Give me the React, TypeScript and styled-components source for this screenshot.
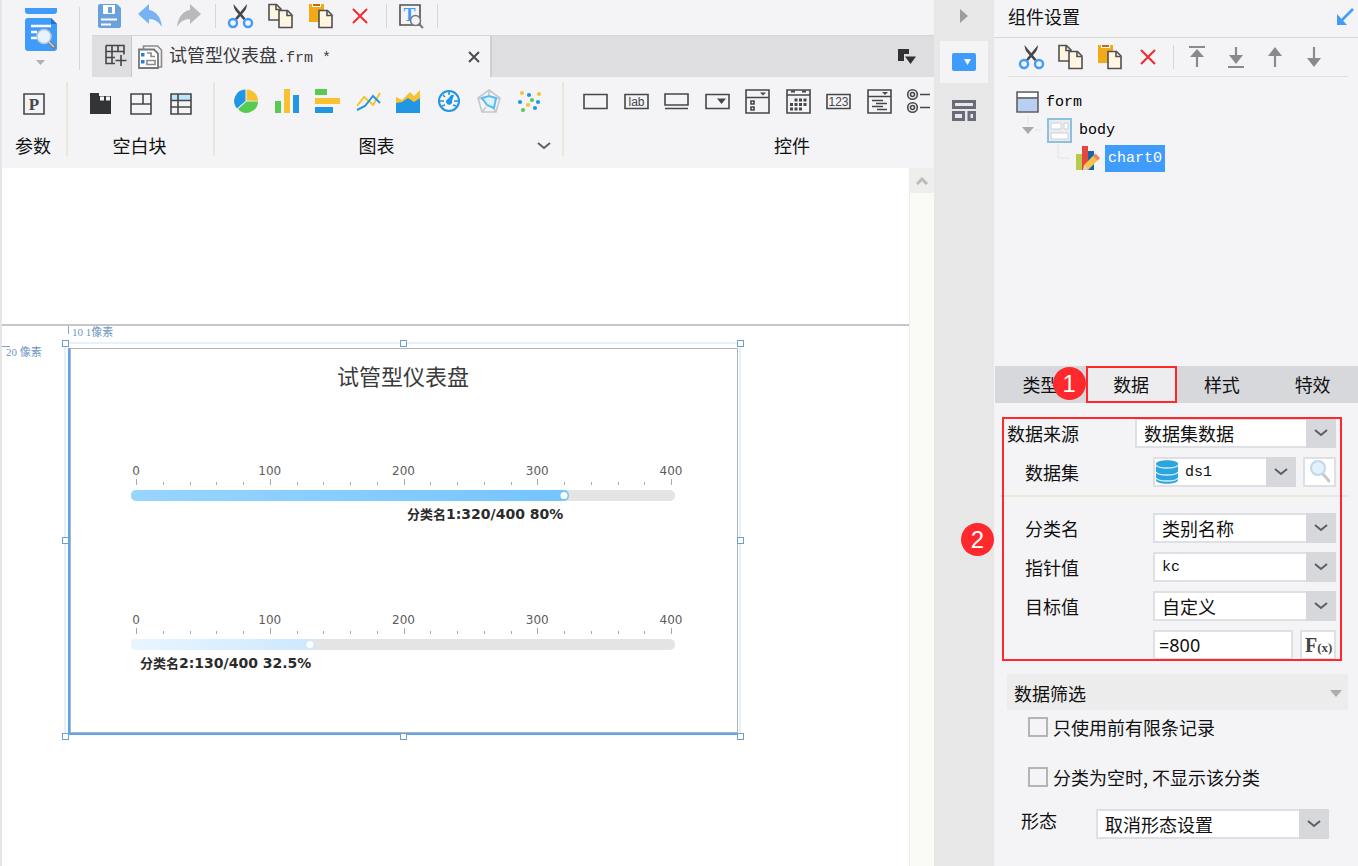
import React from "react";
import styled, { createGlobalStyle, css } from "styled-components";

const c = {
  bg: "#f4f4f7",
  bar: "#dedee0",
  tab: "#d7d8dc",
  rail: "#e7e7e7",
  blue: "#409cfa",
  ink: "#46474a",
  red: "#ff282d",
  line: "#dfe0e3",
};
const cjk = '"Noto Sans CJK SC", sans-serif';
const mono = '"Liberation Mono", "Noto Sans CJK SC", monospace';

const Global = createGlobalStyle`
  *, *::before, *::after { box-sizing: border-box; }
  body { margin: 0; background: ${c.bg}; }
  body, button, input, select { font-family: ${cjk}; font-size: 18px; line-height: 22px; color: #111; }
  button { border: 0; padding: 0; background: none; }
  svg { display: block; flex: none; }
`;

/* ---------- page frame ---------- */
const Page = styled.div`
  display: grid;
  grid-template-columns: minmax(0, 1fr) 60px 364px;
  min-height: 100vh;
`;
const Designer = styled.main`
  display: flex;
  flex-direction: column;
  min-width: 0;
  border-left: 2px solid #e5e5e7;
`;
const Top = styled.header`
  display: flex;
  height: 77px;
`;
const Brand = styled.button`
  display: flex;
  flex-direction: column;
  align-items: center;
  gap: 9px;
  width: 77px;
  padding: 8px 0 0;
`;
const BrandLine = styled.div`
  width: 1px;
  margin: 7px 12px 7px 0;
  background: #d6d6d9;
`;
const TopRight = styled.div`
  flex: 1;
  min-width: 0;
`;
const Tools = styled.div<{ $gap: number; $left: number }>`
  display: flex;
  align-items: center;
  gap: ${(p) => p.$gap}px;
  padding-left: ${(p) => p.$left}px;
`;
const MainTools = styled(Tools)`
  height: 35px;
  padding-bottom: 3px;
`;
const IconButton = styled.button`
  display: flex;
  align-items: center;
  justify-content: center;
  width: 24px;
  height: 24px;
  flex: none;
`;
const ToolLine = styled.div`
  width: 1px;
  height: 24px;
  margin: 0 -4px 0 -2px;
  background: #d6d6d9;
`;
const TabBar = styled.div`
  display: flex;
  height: 42px;
  border-top: 1px solid #d6d6d8;
  background: ${c.bar};
`;
const NewTab = styled.button`
  display: flex;
  align-items: center;
  justify-content: center;
  width: 40px;
  padding: 0 0 3px 6px;
  border-right: 1px solid #c8c8ca;
`;
const FileTab = styled.div`
  display: flex;
  align-items: center;
  gap: 7px;
  width: 360px;
  padding: 0 10px 0 6px;
  border-right: 2px solid #cfcfd1;
  background: ${c.bg};
`;
const FileName = styled.span`
  flex: 1;
  color: #3a3a3c;
  white-space: nowrap;
`;
const Code = styled.span`
  font-family: ${mono};
  font-size: 15px;
`;
const TabMenu = styled.button`
  margin: 0 18px 0 auto;
`;

/* ---------- ribbon ---------- */
const Ribbon = styled.div`
  display: flex;
  height: 91px;
  padding: 5px 0 12px;
  overflow: hidden;
`;
const Group = styled.section<{ $width?: number }>`
  display: flex;
  flex-direction: column;
  gap: 16px;
  padding-top: 7px;
  ${(p) =>
    p.$width
      ? css`
          width: ${p.$width}px;
          flex: none;
          border-right: 2px solid #e8e7dc;
        `
      : css`
          flex: 1;
          min-width: 0;
        `}
`;
const Icons = styled.div<{ $spread?: boolean }>`
  display: flex;
  height: 30px;
  ${(p) =>
    p.$spread
      ? css`
          justify-content: space-between;
          align-items: flex-start;
          width: 348px;
          margin-left: 19px;
        `
      : css`
          justify-content: center;
          align-items: center;
          gap: 16px;
        `}
`;
const ChartIcons = styled(Icons)`
  width: 308px;
`;
const GroupLabel = styled.div`
  position: relative;
  text-align: center;
  line-height: 22px;
`;
const NarrowLabel = styled(GroupLabel)`
  padding-right: 2px;
`;
const WideLabel = styled(GroupLabel)`
  padding-right: 24px;
`;
const WidgetLabel = styled(GroupLabel)`
  width: 456px;
`;
const MoreButton = styled.button`
  position: absolute;
  right: 12px;
  top: 8px;
`;

/* ---------- canvas ---------- */
const Work = styled.div`
  display: flex;
  flex: 1;
  min-height: 698px;
`;
const Sheet = styled.div`
  flex: 1;
  min-width: 0;
  background: #fff;
  overflow: hidden;
`;
const ParamArea = styled.div`
  height: 158px;
  border-bottom: 2px solid #c6c6c6;
`;
const BodyArea = styled.div`
  position: relative;
  padding: 22px 0 0 66px;
`;
const Ruler = styled.span<{ $x: number; $y: number; $side: "left" | "top" }>`
  position: absolute;
  left: ${(p) => p.$x}px;
  top: ${(p) => p.$y}px;
  padding-left: 4px;
  font-family: "Liberation Serif", ${cjk};
  font-size: 11px;
  line-height: 12px;
  color: #6f97bf;
  white-space: nowrap;
  &::before {
    content: "";
    position: absolute;
    left: 0;
    top: 0;
    width: ${(p) => (p.$side === "left" ? 1 : 8)}px;
    height: ${(p) => (p.$side === "left" ? 8 : 1)}px;
    background: #7fa3c7;
  }
`;
const Widget = styled.div`
  position: relative;
  width: 670px;
  border-left: 2px solid #5ba6f4;
  border-bottom: 2px solid #5ba6f4;
  &::before {
    content: "";
    position: absolute;
    inset: -6px -3px 0 -6px;
    border: 2px solid #e6f1fd;
    border-bottom: 0;
  }
`;
const WidgetInner = styled.div`
  position: relative;
  border: 1px solid #b5b5b5;
  background: #fff;
`;
const Handle = styled.i<{ $x: number; $y: number }>`
  position: absolute;
  left: ${(p) => p.$x}px;
  top: ${(p) => p.$y}px;
  width: 7px;
  height: 7px;
  border: 1px solid #6f9fcf;
  background: #fff;
`;
const Scroll = styled.div`
  width: 25px;
  border-left: 1px solid #eeeee8;
  background: #fafaf7;
`;
const ScrollUp = styled.button`
  display: flex;
  align-items: center;
  justify-content: center;
  width: 24px;
  height: 25px;
  background: #eeeeec;
`;

/* ---------- rail ---------- */
const Rail = styled.nav`
  display: flex;
  flex-direction: column;
  align-items: stretch;
  padding: 0 6px;
  background: ${c.rail};
`;
const RailButton = styled.button<{ $h: number; $on?: boolean }>`
  display: flex;
  align-items: center;
  justify-content: center;
  height: ${(p) => p.$h}px;
  background: ${(p) => (p.$on ? c.bg : "none")};
`;

/* ---------- settings panel ---------- */
const Panel = styled.aside`
  display: flex;
  flex-direction: column;
  background: ${c.bg};
`;
const PanelHead = styled.div`
  display: flex;
  align-items: center;
  justify-content: space-between;
  height: 38px;
  padding: 0 4px 5px 14px;
  border-bottom: 1px solid #d9d9db;
`;
const PanelTitle = styled.h1`
  margin: 0;
  font-size: 18px;
  font-weight: 400;
`;
const PanelTools = styled(Tools)`
  height: 39px;
  margin: 0 10px 0 14px;
  border-bottom: 1px solid #e0e0e3;
`;
const Tree = styled.ul`
  list-style: none;
  margin: 11px 0 0;
  padding: 0;
  height: 278px;
`;
const TreeRow = styled.li<{ $left: number }>`
  display: flex;
  align-items: center;
  gap: 5px;
  height: 28px;
  padding-left: ${(p) => p.$left}px;
`;
const NodeName = styled.span<{ $on?: boolean }>`
  padding: 3px ${(p) => (p.$on ? 3 : 2)}px;
  font-family: ${mono};
  font-size: 15px;
  line-height: 21px;
  background: ${(p) => (p.$on ? c.blue : "none")};
  color: ${(p) => (p.$on ? "#fff" : "#000")};
`;
const Tabs = styled.div`
  display: flex;
  height: 37px;
  margin-left: 1px;
  background: ${c.tab};
`;
const Tab = styled.button<{ $on?: boolean }>`
  position: relative;
  flex: 1;
  padding-bottom: 2px;
  ${(p) =>
    p.$on &&
    css`
      background: #ededef;
      outline: 2px solid ${c.red};
      outline-offset: -2px;
    `}
`;
const Badge = styled.span<{ $left: number; $top: number }>`
  position: absolute;
  left: ${(p) => p.$left}px;
  top: ${(p) => p.$top}px;
  width: 33px;
  height: 33px;
  border-radius: 50%;
  background: ${c.red};
  color: #fff;
  font: 24px/33px "Liberation Sans", sans-serif;
  text-align: center;
`;
const DataForm = styled.form`
  position: relative;
  padding: 15px 22px 0 13px;
`;
const Callout = styled.span`
  position: absolute;
  inset: 14px 16px -1px 8px;
  border: 2px solid ${c.red};
  pointer-events: none;
`;
const Row = styled.div<{ $indent?: boolean }>`
  display: flex;
  align-items: center;
  gap: 7px;
  height: 30px;
  margin-bottom: 9px;
  padding-left: ${(p) => (p.$indent ? 18 : 0)}px;
  &:last-of-type {
    margin-bottom: 0;
  }
`;
const Label = styled.label`
  width: 121px;
  flex: none;
`;
const Rule = styled.hr`
  height: 2px;
  margin: -1px -12px 16px -7px;
  border: 0;
  background: #e9e8db;
`;
const SelectBox = styled.div`
  position: relative;
  display: flex;
  flex: 1;
  min-width: 0;
  height: 30px;
`;
const Select = styled.select<{ $code?: boolean; $icon?: boolean }>`
  appearance: none;
  width: 100%;
  height: 30px;
  margin: 0;
  padding: 0 30px 0 ${(p) => (p.$icon ? 30 : 7)}px;
  border: 2px solid ${c.line};
  border-radius: 0;
  background: #fff;
  ${(p) =>
    p.$code &&
    css`
      padding-top: 2px;
      font-family: ${mono};
      font-size: 15px;
    `}
`;
const Arrow = styled.span`
  position: absolute;
  right: 0;
  top: 0;
  display: flex;
  align-items: center;
  justify-content: center;
  width: 30px;
  height: 30px;
  background: ${c.tab};
  pointer-events: none;
`;
const SelectIcon = styled.span`
  position: absolute;
  left: 3px;
  top: 3px;
  pointer-events: none;
`;
const Field = styled.input`
  flex: 1;
  min-width: 0;
  height: 30px;
  padding: 0 4px;
  border: 2px solid ${c.line};
  font-family: "Noto Sans", sans-serif;
`;
const SideButton = styled.button<{ $w: number }>`
  display: flex;
  align-items: center;
  justify-content: center;
  width: ${(p) => p.$w}px;
  height: 30px;
  flex: none;
  border: 2px solid ${c.line};
  background: #fff;
`;
const SectionHead = styled.button`
  display: flex;
  align-items: center;
  justify-content: space-between;
  height: 36px;
  margin: 14px 10px 7px 13px;
  padding: 2px 6px 0 7px;
  background: #ececec;
`;
const Check = styled.label`
  display: flex;
  align-items: center;
  gap: 5px;
  height: 20px;
  margin: 0 0 30px 34px;
  white-space: nowrap;
  input {
    appearance: none;
    width: 20px;
    height: 20px;
    margin: 0;
    border: 2px solid #b4b4b6;
    background: ${c.bg};
  }
`;
const ModeRow = styled.div`
  display: flex;
  align-items: flex-start;
  margin: -8px 29px 0 27px;
`;
const ModeLabel = styled.label`
  width: 75px;
`;

/* ---------- icons ---------- */
type Kids = { children: React.ReactNode; w?: number; h?: number };
const Ico = ({ children, w = 24, h = 24 }: Kids) => (
  <svg width={w} height={h} viewBox={`0 0 ${w} ${h}`} fill="none" overflow="visible" aria-hidden="true">
    {children}
  </svg>
);
const Chevron = ({ up = false, color = "#5d5e61" }) => (
  <Ico w={12} h={8}>
    <path d={up ? "M1 7 6 2l5 5" : "M0 1l6 5 6-5"} stroke={color} strokeWidth={up ? 3 : 2} />
  </Ico>
);
const Triangle = () => (
  <Ico w={12} h={7}>
    <path d="M0 0h12L6 7z" fill="#adadb0" />
  </Ico>
);
const BrandIcon = () => (
  <Ico w={32} h={43}>
    <path d="M0 0h32v3q0 3-3 3H3Q0 6 0 3z" fill={c.blue} />
    <path d="M0 13q0-3 3-3h23l6 6v24q0 3-3 3H3q-3 0-3-3z" fill={c.blue} />
    <path d="M26 10v6h6z" fill="#1f74cf" />
    <path d="M6 18h20M6 24h6M6 30h6" stroke="#fff" strokeWidth="2.4" />
    <path d="m24 34 6 6" stroke="#777" strokeWidth="3.4" />
    <path d="m24 34 5 5" stroke="#d9d9d9" strokeWidth="1.4" />
    <circle cx="19" cy="28.500" r="7" fill="#e6f2fd" stroke="#bfc7cf" strokeWidth="1.600" />
  </Ico>
);
const Save = () => (
  <Ico>
    <path d="M1 2q0-2 2-2h17l4 4v18q0 2-2 2H3q-2 0-2-2z" fill="#68a1dc" />
    <path d="M6 1h12v8q0 1-1 1H7q-1 0-1-1z" fill="#fff" />
    <path d="M11 3h4v6h-4z" fill="#68a1dc" />
    <path d="M4 15.500h16M4 20.500h10" stroke="#fff" strokeWidth="1.800" />
  </Ico>
);
const Undo = ({ redo = false }) => (
  <Ico>
    <g transform={redo ? "matrix(-1 0 0 1 25 0)" : undefined}>
      <path d="M1 10 12 0v6c7 1 12 7 13 17-3-5-7-8-13-8v5z" fill={redo ? "#b9b9bb" : "#77b3f0"} />
    </g>
  </Ico>
);
const Cut = () => (
  <Ico>
    <path d="M5.500 0q0 5 4 9l6 7 2-1.500z" fill={c.ink} />
    <path d="M19 0q0 5-4 9l-6 7-2-1.500z" fill={c.ink} />
    <circle cx="5" cy="19" r="4" stroke={c.blue} strokeWidth="2.400" />
    <circle cx="20" cy="19" r="4" stroke={c.blue} strokeWidth="2.400" />
  </Ico>
);
const FrontDoc = () => (
  <g stroke="#505052" strokeWidth="1.600">
    <path d="M11 6.500h8.500l4.500 4.500v12.500H11z" fill="#fff6e1" />
    <path d="M19 7v4.500h4.500" />
  </g>
);
const Copy = () => (
  <Ico>
    <path d="M1 .5h7.500L13 5v11H1z" fill="#fff6e1" stroke="#505052" strokeWidth="1.600" />
    <path d="M8 1v4.500h4.500" stroke="#505052" strokeWidth="1.600" />
    <FrontDoc />
  </Ico>
);
const Paste = () => (
  <Ico>
    <path d="M1 0h15v18H1z" fill="#f2ab18" />
    <path d="M4 0h9v3H4z" fill="#fff" />
    <path d="M5 0h7v2H5z" fill="#c9661a" />
    <FrontDoc />
  </Ico>
);
const Delete = () => (
  <Ico>
    <path d="m5 5 14 14M19 5 5 19" stroke="#f0282d" strokeWidth="2" />
  </Ico>
);
const FindText = () => (
  <Ico>
    <path d="M1 1h20v20H1z" stroke="#505052" strokeWidth="1.600" />
    <text x="10.500" y="17" textAnchor="middle" fontSize="18" fontWeight="700" fontFamily="Liberation Serif" fill={c.blue}>T</text>
    <circle cx="16.500" cy="16.500" r="5" fill={c.bg} stroke="#777" strokeWidth="1.500" />
    <path d="m20 20 4 4" stroke="#777" strokeWidth="2" />
  </Ico>
);
const GridPlus = () => (
  <Ico>
    <path d="M3 2.500h18v9M3 2.500v18h9M3 8.500h18M3 14.500h9M9 2.500v18M15 2.500v6M18 12v11M12.500 17.500h11" stroke="#444547" strokeWidth="1.600" />
  </Ico>
);
const FileIcon = () => (
  <Ico>
    <path d="M5.500 4V1h14l4 4v17h-3" stroke="#8b8b8d" strokeWidth="1.600" />
    <path d="M1 4.500h15l4 4V23H1z" fill="#fff" stroke="#77777a" strokeWidth="1.800" />
    <path d="M3 8h3.500v3.500H3zM3 15h3.500v3.500H3z" fill="#2a7fd0" />
    <path d="M9 8h4v3.500h4M9 15.500h8v4H9z" stroke="#8b8b8d" strokeWidth="1.600" />
  </Ico>
);
const CloseX = () => (
  <Ico w={12} h={12}>
    <path d="m1 1 10 10M11 1 1 11" stroke="#4c4d50" strokeWidth="2" />
  </Ico>
);
const TabListIcon = () => (
  <Ico w={18} h={15}>
    <path d="M0 0h11v5H6v7H0z" fill="#303133" />
    <path d="M7 7.500h11L12.500 15z" fill="#303133" />
  </Ico>
);

const line = { stroke: "#464749", strokeWidth: 1.6 };
const Param = () => (
  <Ico>
    <path d="M2 2h20v20H2z" {...line} />
    <text x="12" y="18" textAnchor="middle" fontSize="17" fontWeight="700" fontFamily="Liberation Serif" fill="#464749">P</text>
  </Ico>
);
const blanks = [
  <Ico key="a">
    <path d="M1 1h9v3h12v18H1z" fill="#333436" />
    <path d="M11 4.500h4v4h-4zM17 4.500h4v4h-4z" fill="#f4f4f7" />
  </Ico>,
  <Ico key="b">
    <path d="M2 2h20v20H2zM2 12h20M14 2v10" {...line} />
  </Ico>,
  <Ico key="c">
    <path d="M2 2h20v6H2z" fill="#bfe6f8" />
    <path d="M2 2h20v20H2zM2 8.500h20M2 15h20M9 2v20" {...line} />
  </Ico>,
];
const B = "#2196e3";
const Y = "#f9c132";
const G = "#55cb51";
const charts = [
  <Ico key="pie">
    <path d="M12.500 11.500V.5A11.500 11.500 0 0 1 24 12z" fill={Y} />
    <path d="M11.500 12V.5a11.500 11.500 0 0 0-8.500 19z" fill={B} />
    <path d="M12.500 12.500H24a11.500 11.500 0 0 1-20 7.500z" fill={G} />
  </Ico>,
  <Ico key="column">
    <path d="M0 12h6v12H0z" fill={G} />
    <path d="M9 0h6v24H9z" fill={Y} />
    <path d="M18 6h6v18h-6z" fill={B} />
  </Ico>,
  <Ico key="bar">
    <path d="M0 0h12v6H0z" fill={G} />
    <path d="M0 9h25v6H0z" fill={Y} />
    <path d="M0 18h18v6H0z" fill={B} />
  </Ico>,
  <Ico key="line">
    <path d="m1 17 7-9 9 8 7-12" stroke={Y} strokeWidth="2" />
    <path d="m1 21 8-4 8-10 7 7" stroke={B} strokeWidth="2" />
  </Ico>,
  <Ico key="area">
    <path d="m0 8 6 3 8-8 4 4 6-6v15H0z" fill={Y} />
    <path d="m0 14 6-1 6-4 6 4 6-4v15H0z" fill={B} />
  </Ico>,
  <Ico key="gauge">
    <circle cx="12" cy="12" r="10" stroke={B} strokeWidth="2" />
    <path d="M12 3v3M3 12h4M17 12h4M5 17l3-1M19 17l-3-1M6 6l2 2" stroke={B} strokeWidth="1.600" />
    <path d="M14 6h3l-2 6a3 3 0 1 1-4-2z" fill={B} />
  </Ico>,
  <Ico key="radar">
    <path d="M12 1l11 8-4 14H5L1 9zM12 1v5M1 9l5 1M23 9l-4 1M5 23l4-5M19 23l-3-4" stroke="#c6c7ca" strokeWidth="1.600" />
    <path d="M5 9l7-2 7 2-2 10-7-3z" stroke="#59bdf2" strokeWidth="2" fill="#dff1fb" />
  </Ico>,
  <Ico key="scatter">
    {([[3, 3, Y], [20, 4, Y], [10, 5, B], [1, 12, B], [13, 10, G], [19, 12, B], [9, 15, Y], [16, 18, B], [4, 20, G]] as const).map(([x, y, f]) => (
      <circle key={`${x}-${y}`} cx={x + 1} cy={y + 1} r="2.100" fill={f} />
    ))}
  </Ico>,
];
const widgets = [
  <Ico key="text"><path d="M1 5.500h23v14H1z" {...line} /></Ico>,
  <Ico key="label">
    <path d="M1 5.500h23v14H1z" {...line} />
    <text x="12.500" y="17" textAnchor="middle" fontSize="12" fontFamily="Liberation Sans" fill="#464749">lab</text>
  </Ico>,
  <Ico key="button"><path d="M1 5h23v11H1zM1 19.500h23" {...line} /></Ico>,
  <Ico key="combo">
    <path d="M1 5.500h23v14H1z" {...line} />
    <path d="M12 9.500h9L16.500 15z" fill="#464749" />
  </Ico>,
  <Ico key="check">
    <path d="M1 1h23v23H1zM1 8.500h23M6 12h3v3H6zM6 18h3v3H6z" {...line} />
    <path d="M15 3.500h6l-3 3z" fill="#464749" />
  </Ico>,
  <Ico key="date">
    <path d="M1 1h23v23H1zM1 6h23" {...line} />
    <path d="M5 2.500h4M16 2.500h4" stroke="#464749" strokeWidth="2" />
    <path d="M8.500 11h12.500M4 15.500h17M4 20h13" stroke="#464749" strokeWidth="3" strokeDasharray="3 1.500" />
  </Ico>,
  <Ico key="number">
    <path d="M1 5.500h23v14H1z" {...line} />
    <text x="12.500" y="17" textAnchor="middle" fontSize="12" fontFamily="Liberation Sans" fill="#464749">123</text>
  </Ico>,
  <Ico key="tree">
    <path d="M1 1h23v23H1zM1 7.500h23M5 11.500h11M9 14.500h11M5 17.500h11M10 20.500h10" {...line} />
    <path d="M15 3h6l-3 3z" fill="#464749" />
  </Ico>,
  <Ico key="radio">
    <circle cx="5.500" cy="5.500" r="4.800" {...line} />
    <circle cx="5.500" cy="5.500" r="2" {...line} />
    <circle cx="5.500" cy="18.500" r="4.800" {...line} />
    <circle cx="5.500" cy="18.500" r="2" {...line} />
    <path d="M13 5.500h10M13 18.500h10" {...line} />
  </Ico>,
];

const arrows: [string, string][] = [
  ["置顶", "M4 2h16M12 22V6"],
  ["置底", "M4 22h16M12 2v14"],
  ["上移", "M12 22V6"],
  ["下移", "M12 2v14"],
];
const MoveIcon = ({ d, up, bar }: { d: string; up: boolean; bar: boolean }) => {
  const head = up ? (bar ? "M5 12h14l-7-8z" : "M5 11h14l-7-9z") : bar ? "M5 10h14l-7 9z" : "M5 13h14l-7 9z";
  return (
    <Ico>
      <path d={d} stroke="#8a8a8c" strokeWidth="2.200" />
      <path d={head} fill="#8a8a8c" />
    </Ico>
  );
};

const FormIcon = () => (
  <Ico w={23} h={22}>
    <path d="M1 1h21v20H1z" fill="#b9d0f2" stroke="#606164" strokeWidth="1.600" />
    <path d="M2 2h19v4H2z" fill="#fff" />
    <path d="M1 7h21" stroke="#606164" strokeWidth="1.600" />
  </Ico>
);
const BodyIcon = () => (
  <Ico w={25} h={25}>
    <path d="M1 1h23v23H1z" fill="#e9edf0" stroke="#8cc0de" strokeWidth="2" />
    <path d="M4 5h10v6H4zM17 5h4v6h-4zM4 15h17v6H4z" fill="#fff" stroke="#cfd0d2" />
  </Ico>
);
const ChartIcon = () => (
  <Ico>
    <path d="M0 8h6v16H0z" fill="#b5cb49" />
    <path d="M6 0h6v24H6z" fill="#e8453c" />
    <path d="M12 5h6v19h-6z" fill="#1467ac" />
    <path d="m8 19 10-10 4.500 4.500-10 10-4.500.5z" fill="#f9c34a" />
    <path d="m17 10 2.500-2.500 4.500 4.500-2.500 2.500z" fill="#f08264" />
    <path d="m8 19 4.500 4.500L7 24z" fill="#d8d3cd" />
  </Ico>
);
const Database = () => (
  <Ico w={22} h={24}>
    <path d="M0 4c0-5 22-5 22 0v16c0 5-22 5-22 0z" fill="#2ba4e0" />
    <path d="M0 5c2 4 20 4 22 0M0 12c2 4 20 4 22 0M0 18c2 4 20 4 22 0" stroke="#d6effb" strokeWidth="1.500" />
  </Ico>
);
const Magnifier = () => (
  <Ico w={22} h={24}>
    <path d="m14 14 6 7" stroke="#c9c9cc" strokeWidth="3" strokeLinecap="round" />
    <circle cx="9" cy="8" r="7" fill="#e3f1fd" stroke="#c3d6ea" strokeWidth="2" />
  </Ico>
);

/* ---------- chart ---------- */
type GaugeProps = { y: number; value: number; name: string; stat: string; labelX: number; from: string; to: string };
const Gauge = ({ y, value, name, stat, labelX, from, to }: GaugeProps) => {
  const at = (v: number) => 65 + v * 1.3375;
  const id = `fill-${value}`;
  return (
    <g transform={`translate(0 ${y})`}>
      <defs>
        <linearGradient id={id}>
          <stop offset="0" stopColor={from} />
          <stop offset="1" stopColor={to} />
        </linearGradient>
      </defs>
      {Array.from({ length: 21 }, (_, i) => {
        const major = i % 5 === 0;
        const x = Math.round(at(i * 20)) + 0.5;
        return <path key={i} d={`M${x} ${major ? 16 : 19}V22`} stroke="#a9a9a9" />;
      })}
      {[0, 100, 200, 300, 400].map((v) => (
        <text key={v} x={at(v)} y="12" textAnchor="middle" fontFamily="DejaVu Sans" fontSize="12" fill="#5c5c5c">
          {v}
        </text>
      ))}
      <rect x="60" y="27" width="544" height="11" rx="5" fill="#e4e4e4" />
      <rect x="60" y="27" width={at(value) - 60 + 5} height="11" rx="5" fill={`url(#${id})`} />
      <circle cx={at(value)} cy="32.500" r="3.500" fill="#fff" />
      <text x={labelX} y="56" fontWeight="700" fill="#2b2b2b" fontFamily="Noto Sans CJK SC" fontSize="13">
        {name}
        <tspan fontFamily="DejaVu Sans" fontSize="14">{stat}</tspan>
      </text>
    </g>
  );
};
const TubeChart = () => (
  <svg width="666" height="383" viewBox="0 0 666 383" role="img" aria-label="试管型仪表盘">
    <text x="332" y="36" textAnchor="middle" fontFamily="Noto Sans CJK SC" fontSize="22" fill="#3a3a3a">
      试管型仪表盘
    </text>
    <Gauge y={114} value={320} name="分类名" stat="1:320/400 80%" labelX={336} from="#98d5ff" to="#74c4fe" />
    <Gauge y={263} value={130} name="分类名" stat="2:130/400 32.5%" labelX={69} from="#e9f5ff" to="#cde8fe" />
  </svg>
);

const handles = [
  [-8, -8], [330, -8], [667, -8],
  [-8, 189], [667, 189],
  [-8, 385], [330, 385], [667, 385],
];

/* ---------- form parts ---------- */
type DropProps = { id: string; value: string; code?: boolean; icon?: React.ReactNode };
const Drop = ({ id, value, code, icon }: DropProps) => (
  <SelectBox>
    <Select id={id} $code={code} $icon={!!icon} defaultValue={value}>
      <option>{value}</option>
    </Select>
    {icon && <SelectIcon>{icon}</SelectIcon>}
    <Arrow><Chevron /></Arrow>
  </SelectBox>
);

const EditTools = () => (
  <>
    <IconButton aria-label="剪切"><Cut /></IconButton>
    <IconButton aria-label="复制"><Copy /></IconButton>
    <IconButton aria-label="粘贴"><Paste /></IconButton>
    <IconButton aria-label="删除"><Delete /></IconButton>
  </>
);

export default function App() {
  return (
    <>
      <Global />
      <Page>
        <Designer>
          <Top>
            <Brand aria-label="预览">
              <BrandIcon />
              <Ico w={9} h={5}><path d="M0 0h9L4.500 5z" fill="#b0b0b3" /></Ico>
            </Brand>
            <BrandLine />
            <TopRight>
              <MainTools $gap={16} $left={5}>
                <IconButton aria-label="保存"><Save /></IconButton>
                <IconButton aria-label="撤销"><Undo /></IconButton>
                <IconButton aria-label="重做"><Undo redo /></IconButton>
                <ToolLine />
                <EditTools />
                <ToolLine />
                <IconButton aria-label="查找"><FindText /></IconButton>
                <ToolLine />
              </MainTools>
              <TabBar>
                <NewTab aria-label="新建"><GridPlus /></NewTab>
                <FileTab>
                  <FileIcon />
                  <FileName>试管型仪表盘<Code>.frm *</Code></FileName>
                  <button aria-label="关闭"><CloseX /></button>
                </FileTab>
                <TabMenu aria-label="标签列表"><TabListIcon /></TabMenu>
              </TabBar>
            </TopRight>
          </Top>

          <Ribbon>
            <Group $width={66}>
              <Icons><IconButton aria-label="参数"><Param /></IconButton></Icons>
              <NarrowLabel>参数</NarrowLabel>
            </Group>
            <Group $width={147}>
              <Icons>{blanks.map((i) => <IconButton key={i.key}>{i}</IconButton>)}</Icons>
              <NarrowLabel>空白块</NarrowLabel>
            </Group>
            <Group $width={349}>
              <ChartIcons $spread>{charts.map((i) => <IconButton key={i.key}>{i}</IconButton>)}</ChartIcons>
              <WideLabel>
                图表
                <MoreButton aria-label="更多"><Chevron /></MoreButton>
              </WideLabel>
            </Group>
            <Group>
              <Icons $spread>{widgets.map((i) => <IconButton key={i.key}>{i}</IconButton>)}</Icons>
              <WidgetLabel>控件</WidgetLabel>
            </Group>
          </Ribbon>

          <Work>
            <Sheet>
              <ParamArea />
              <BodyArea>
                <Ruler $x={66} $y={0} $side="left">10 1像素</Ruler>
                <Ruler $x={0} $y={20} $side="top">20 像素</Ruler>
                <Widget>
                  <WidgetInner><TubeChart /></WidgetInner>
                  {handles.map(([x, y]) => <Handle key={`${x},${y}`} $x={x} $y={y} />)}
                </Widget>
              </BodyArea>
            </Sheet>
            <Scroll>
              <ScrollUp aria-label="向上滚动"><Chevron up color="#bcbcbc" /></ScrollUp>
            </Scroll>
          </Work>
        </Designer>

        <Rail>
          <RailButton $h={41} aria-label="收起">
            <Ico w={8} h={24}><path d="M0 0v14l8-7z" fill="#9d9d9f" /></Ico>
          </RailButton>
          <RailButton $h={42} $on aria-label="组件设置">
            <Ico h={18}>
              <rect width="24" height="18" rx="2" fill={c.blue} />
              <path d="M12 6h7l-3.500 6z" fill="#fff" />
            </Ico>
          </RailButton>
          <RailButton $h={55} aria-label="组件库">
            <Ico h={21}>
              <path d="M1.500 1.500h21v6h-21zM1.500 12.500h10v7h-10zM17 12.500h5.500v7H17z" stroke="#6a6b78" strokeWidth="3" />
            </Ico>
          </RailButton>
        </Rail>

        <Panel>
          <PanelHead>
            <PanelTitle>组件设置</PanelTitle>
            <button aria-label="弹出">
              <Ico w={17} h={17}>
                <path d="M16 1 5 12" stroke={c.blue} strokeWidth="2.600" />
                <path d="M0 6v11h10z" fill={c.blue} />
              </Ico>
            </button>
          </PanelHead>
          <PanelTools $gap={15} $left={11}>
            <EditTools />
            <ToolLine />
            {arrows.map(([name, d], i) => (
              <IconButton key={name} aria-label={name}>
                <MoveIcon d={d} up={i % 2 === 0} bar={i < 2} />
              </IconButton>
            ))}
          </PanelTools>
          <Tree>
            <TreeRow $left={22}><FormIcon /><NodeName>form</NodeName></TreeRow>
            <TreeRow $left={28}>
              <Ico w={20} h={28}>
                <path d="M6 0v9M13 14h6" stroke="#e2e2e6" />
                <path d="M0 11h12l-6 7z" fill="#a9a9ab" />
              </Ico>
              <BodyIcon />
              <NodeName>body</NodeName>
            </TreeRow>
            <TreeRow $left={63}>
              <Ico w={14} h={28}><path d="M1 0v14h12" stroke="#e2e2e6" /></Ico>
              <ChartIcon />
              <NodeName $on>chart0</NodeName>
            </TreeRow>
          </Tree>

          <Tabs>
            <Tab>类型</Tab>
            <Tab $on>
              数据
              <Badge $left={-33} $top={1}>1</Badge>
            </Tab>
            <Tab>样式</Tab>
            <Tab>特效</Tab>
          </Tabs>

          <DataForm>
            <Row><Label htmlFor="source">数据来源</Label><Drop id="source" value="数据集数据" /></Row>
            <Row $indent>
              <Label htmlFor="dataset">数据集</Label>
              <Drop id="dataset" value="ds1" code icon={<Database />} />
              <SideButton type="button" $w={33} aria-label="预览数据集"><Magnifier /></SideButton>
            </Row>
            <Rule />
            <Row $indent><Label htmlFor="category">分类名</Label><Drop id="category" value="类别名称" /></Row>
            <Row $indent><Label htmlFor="pointer">指针值</Label><Drop id="pointer" value="kc" code /></Row>
            <Row $indent><Label htmlFor="target">目标值</Label><Drop id="target" value="自定义" /></Row>
            <Row $indent>
              <Label htmlFor="formula" aria-label="目标值公式" />
              <Field id="formula" defaultValue="=800" />
              <SideButton type="button" $w={36} aria-label="公式">
                <Ico w={28} h={24}>
                  <text x="1" y="19" fontFamily="Liberation Serif" fontWeight="700" fontSize="20" fill="#444">
                    F<tspan fontSize="13">(x)</tspan>
                  </text>
                </Ico>
              </SideButton>
            </Row>
            <Callout><Badge $left={-43} $top={104}>2</Badge></Callout>
          </DataForm>

          <SectionHead>数据筛选<Triangle /></SectionHead>
          <Check><input type="checkbox" />只使用前有限条记录</Check>
          <Check><input type="checkbox" />分类为空时, 不显示该分类</Check>
          <ModeRow>
            <ModeLabel htmlFor="mode">形态</ModeLabel>
            <Drop id="mode" value="取消形态设置" />
          </ModeRow>
        </Panel>
      </Page>
    </>
  );
}
